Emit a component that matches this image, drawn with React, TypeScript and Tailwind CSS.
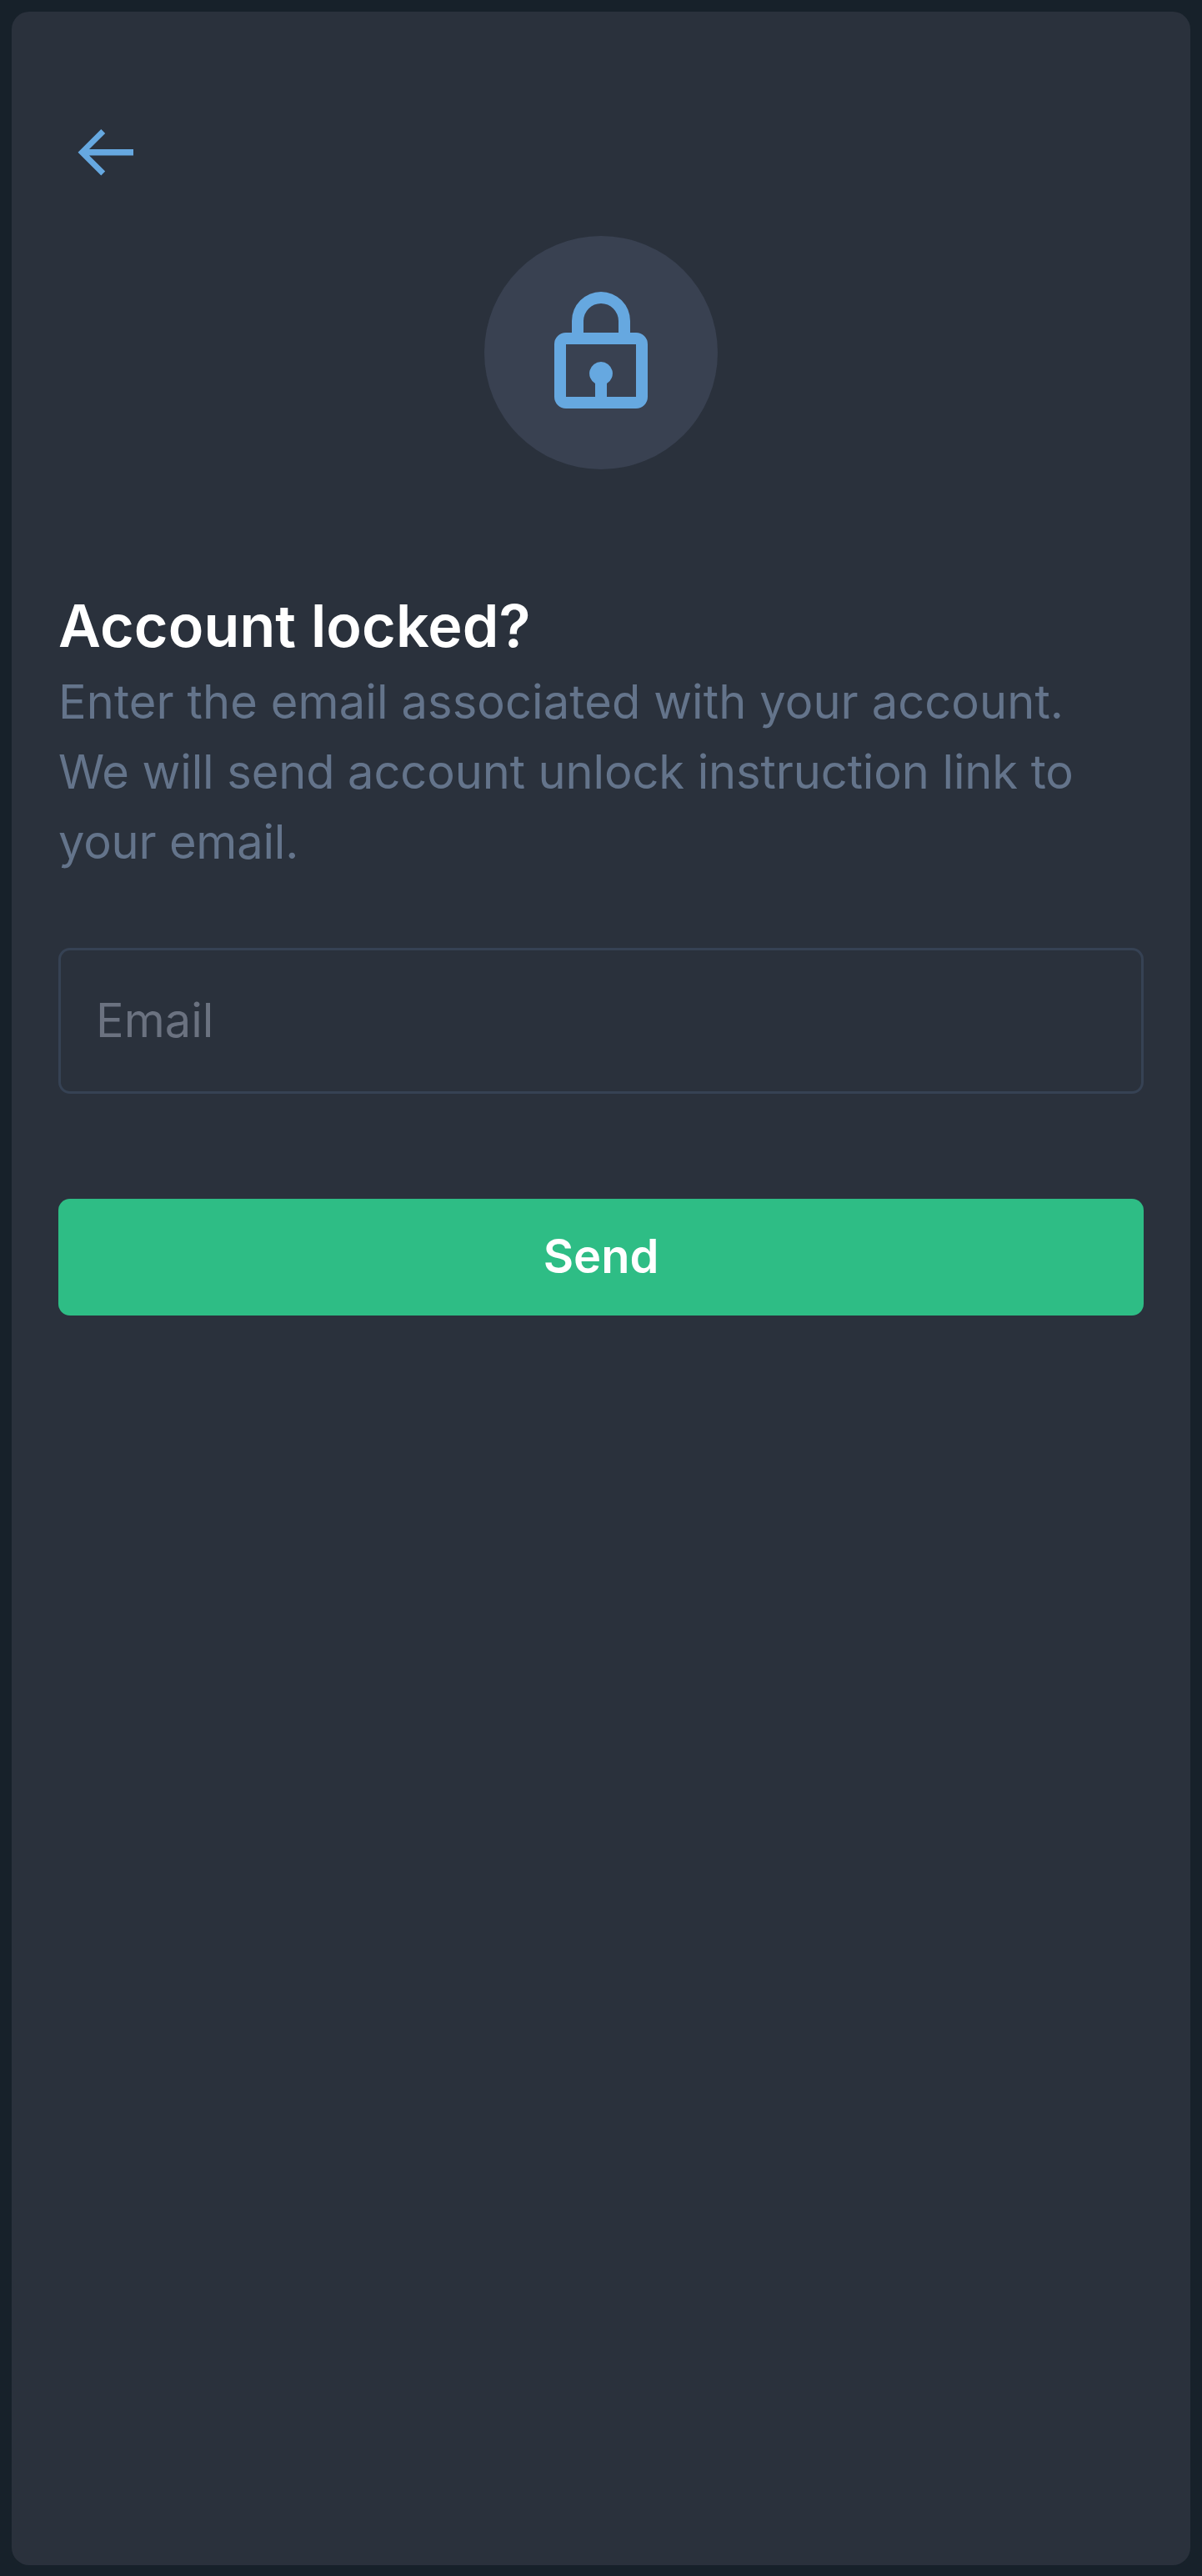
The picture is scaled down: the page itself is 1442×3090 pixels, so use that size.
function BackArrow() {
  return (
    <svg className="block h-[56px] w-[67px]" viewBox="93 155 67 56" fill="#66a8e0" aria-hidden="true">
      <path d="M160 179H107L126.2 159.9L121.3 155L93.5 182.75L121.3 210.5L126.2 205.6L107 186.5H160Z" />
    </svg>
  );
}

function LockIcon() {
  return (
    <svg className="block size-[168px]" viewBox="0 0 24 24" fill="#66a8e0" aria-hidden="true">
      <path
        fillRule="evenodd"
        d="M12 2a5 5 0 0 0-5 5v2H6a2 2 0 0 0-2 2v9a2 2 0 0 0 2 2h12a2 2 0 0 0 2-2v-9a2 2 0 0 0-2-2h-1V7a5 5 0 0 0-5-5ZM9 7a3 3 0 0 1 6 0v2H9V7ZM6 11h12v9h-5v-2.277A2 2 0 0 0 12 14a2 2 0 0 0-1 3.723V20H6v-9Z"
      />
    </svg>
  );
}

export default function App() {
  return (
    <main className="h-[3090px] w-[1442px] bg-[#17212a] p-[14px] pb-[13px] font-['Inter',sans-serif]">
      <section className="flex h-full flex-col rounded-[21px] bg-[#2a313c] px-[56px] pt-[141px]">
        <button type="button" aria-label="Back" className="ml-[23px] self-start">
          <BackArrow />
        </button>

        <div className="mt-[72px] flex size-[280px] items-start justify-center self-center rounded-full bg-[#394151] pt-[53px]">
          <LockIcon />
        </div>

        <h1 className="mt-[139px] text-[70px] leading-[98px] font-semibold tracking-[0.1px] text-white">Account locked?</h1>
        <p className="text-[56px] leading-[84px] text-[#64748b]">
          <span className="tracking-[0.1px]">Enter the email associated with your account. </span>
          <span className="tracking-[-0.1px]">We will send account unlock instruction link to </span>
          <span className="tracking-[-0.2px]">your email.</span>
        </p>

        <input
          type="email"
          placeholder="Email"
          className="mt-[85px] h-[175px] w-full rounded-[14px] border-[3px] border-[#364254] bg-transparent px-[42px] pb-[2px] text-[56px] leading-[84px] text-white outline-none placeholder:text-[#6b7280]"
        />
        <button
          type="button"
          className="mt-[126px] h-[140px] w-full rounded-[14px] bg-[#2ebd85] pb-[2px] text-[56px] leading-[84px] font-semibold text-white"
        >
          Send
        </button>
      </section>
    </main>
  );
}
